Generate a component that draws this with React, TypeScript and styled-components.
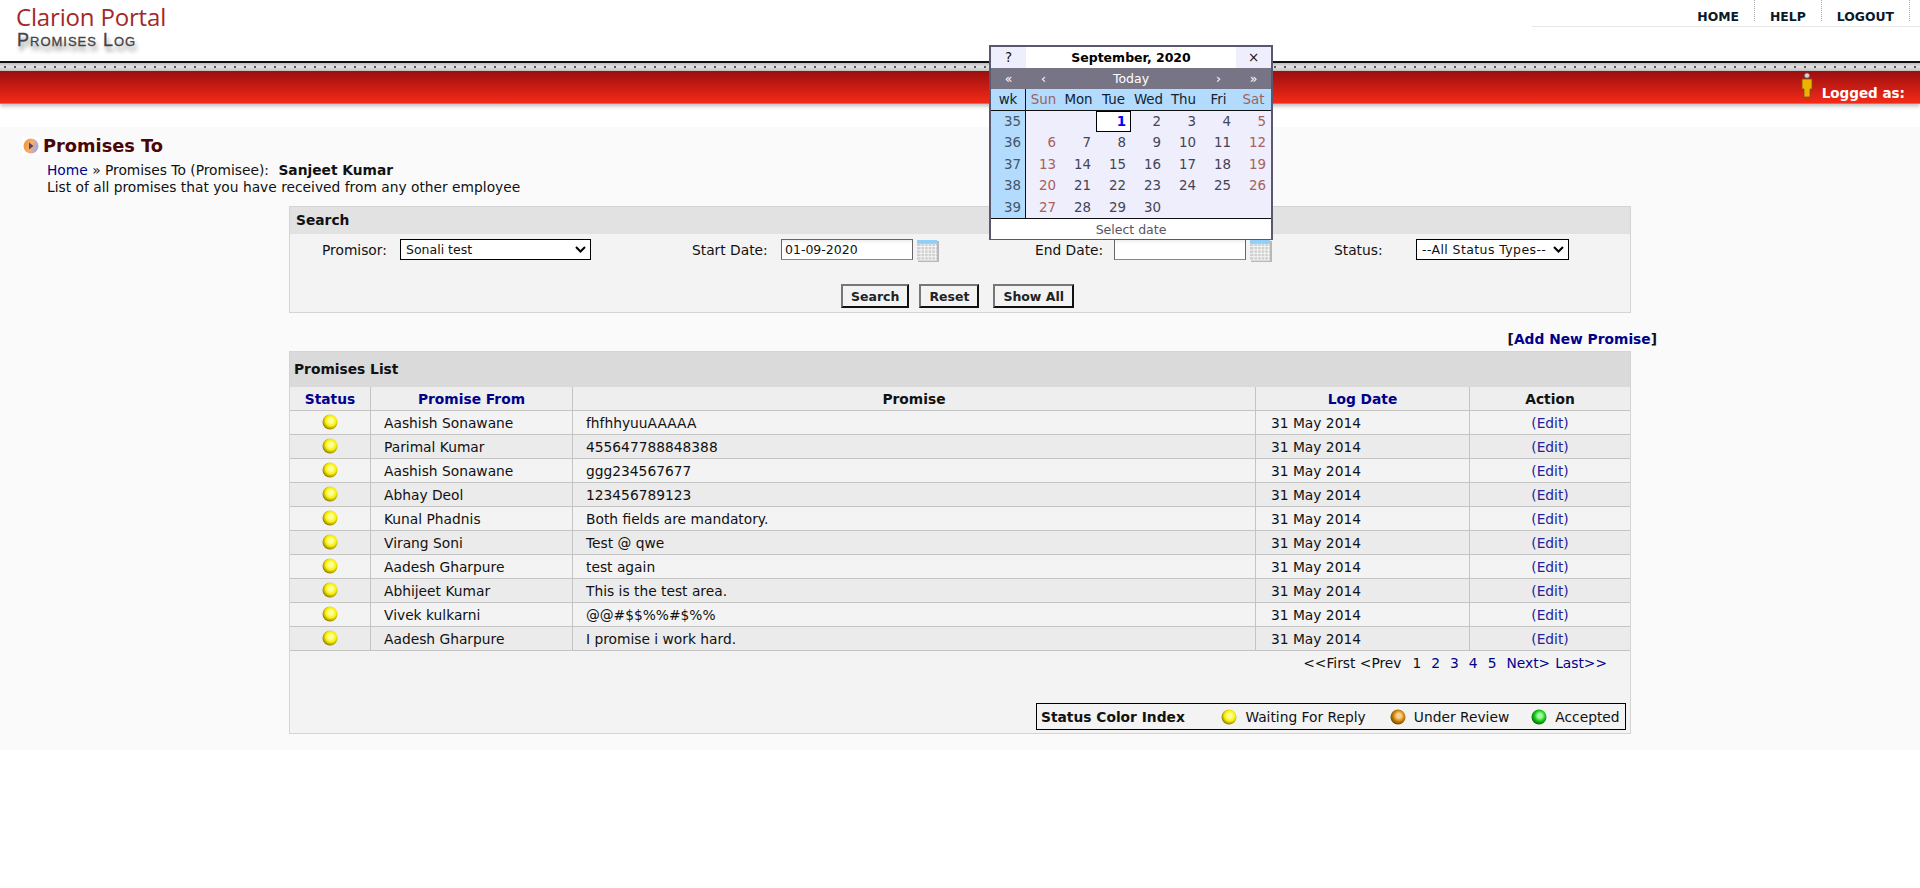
import styled, {createGlobalStyle} from "styled-components";

const GlobalStyle = createGlobalStyle`
  html, body {
    margin: 0;
    padding: 0;
    background: #fff;
    font-family: "DejaVu Sans", Verdana, sans-serif;
    font-size: 13.8px;
    color: #111;
  }
`;

const Page = styled.div`
  position: relative;
  width: 1920px;
  height: 888px;
  overflow: hidden;
`;

const Header = styled.header`
  height: 61px;
  display: flex;
  justify-content: space-between;
`;

const Logo = styled.div`
  padding: 3px 0 0 16px;
`;

const LogoTitle = styled.div`
  font-family: "Open Sans", "Liberation Sans", sans-serif;
  font-size: 24px;
  line-height: 27px;
  letter-spacing: -0.17px;
  color: #a3282a;
`;

const LogoSub = styled.div`
  font-family: "Liberation Sans", sans-serif;
  font-size: 18px;
  line-height: 20px;
  letter-spacing: 1px;
  font-variant: small-caps;
  color: #444;
  -webkit-text-stroke: 0.3px #444;
  text-shadow: 2px 5px 4px #888;
  padding-left: 1px;
`;

const TopNav = styled.nav`
  width: 388px;
  height: 27px;
  display: flex;
  justify-content: flex-end;
  border-bottom: 1px solid #e6e6e6;
  padding-right: 10px;
  box-sizing: border-box;
`;

const TopLink = styled.a`
  font-size: 12.4px;
  font-weight: 700;
  color: #0a1a2a;
  line-height: 33px;
  height: 21px;
  padding: 0 15px 0 15px;
  border-right: 1px dotted #aaa;
  box-sizing: border-box;
`;

const Strip = styled.div`
  height: 10px;
  box-sizing: border-box;
  border-top: 2px solid #111;
  background-color: #d4d4d4;
  background-image:
    radial-gradient(circle at 50% 50%, #555 0, #555 1px, transparent 1.5px),
    linear-gradient(#bdbdbd, #e2e2e2 45%, #c4c4c4);
  background-size: 10px 8px, 100% 100%;
`;

const RedBar = styled.div`
  height: 33px;
  box-sizing: border-box;
  background: linear-gradient(#9b0e0e, #f52a18);
  border-bottom: 1px solid #8a8a8a;
  box-shadow: 0 2px 4px #bbb;
  display: flex;
  justify-content: flex-end;
  align-items: flex-end;
  gap: 9px;
  padding-right: 15px;
`;

const LoggedAs = styled.span`
  color: #fff;
  font-weight: 700;
  font-size: 13.5px;
  line-height: 20px;
`;

const UserIcon = styled.svg`
  width: 12px;
  height: 26px;
  margin-bottom: 5px;
`;

const Content = styled.main`
  margin-top: 23px;
  height: 623px;
  background: #fafafa;
  padding: 7px 0 0 22px;
  box-sizing: border-box;
`;

const TitleRow = styled.div`
  display: flex;
  align-items: center;
  gap: 3px;
`;

const TitleIcon = styled.svg`
  width: 18px;
  height: 18px;
  background: #fff;
`;

const PageTitle = styled.h1`
  margin: 0;
  font-size: 17.8px;
  line-height: 24px;
  font-weight: 700;
  color: #4a0505;
`;

const Intro = styled.div`
  margin: 4px 0 0 25px;
  line-height: 17px;
`;

const Crumb = styled.a`
  color: #00008b;
`;

const Promisee = styled.strong`
  margin-left: 5px;
`;

const Panel = styled.section`
  width: 1342px;
  margin-left: 267px;
  box-sizing: border-box;
  border: 1px solid #d4d4d4;
  background: #f3f3f3;
`;

const SearchPanel = styled(Panel)`
  margin-top: 10px;
  height: 107px;
`;

const PanelTitle = styled.div<{$tall?: boolean}>`
  height: ${p => (p.$tall ? 35 : 27)}px;
  line-height: ${p => (p.$tall ? 35 : 27)}px;
  background: ${p => (p.$tall ? "#dadada" : "#e2e2e2")};
  font-weight: 700;
  padding-left: ${p => (p.$tall ? 4 : 6)}px;
`;

const FilterRow = styled.div`
  display: grid;
  grid-template-columns: 370px 343px 299px 1fr;
  padding: 4px 0 0 32px;
  height: 32px;
  box-sizing: border-box;
`;

const Filter = styled.div`
  display: flex;
  align-items: flex-start;
  line-height: 24px;
`;

const FilterLabel = styled.span<{$width: number}>`
  width: ${p => p.$width}px;
`;

const FakeSelect = styled.div<{$width: number; $spacing?: number}>`
  width: ${p => p.$width}px;
  height: 21px;
  margin-top: 1px;
  box-sizing: border-box;
  border: 1px solid #000;
  background: #fff;
  font-size: 12.5px;
  letter-spacing: ${p => p.$spacing || 0}px;
  line-height: 19px;
  padding-left: 5px;
  position: relative;
`;

const Caret = styled.svg`
  position: absolute;
  right: 4px;
  top: 6px;
  width: 11px;
  height: 7px;
`;

const DateInput = styled.div`
  width: 132px;
  height: 21px;
  margin-top: 1px;
  box-sizing: border-box;
  border: 1px solid #666;
  border-bottom-color: #888;
  background: linear-gradient(#eee, #fff 4px);
  font-size: 12.5px;
  line-height: 19px;
  padding-left: 3px;
`;

const CalIcon = styled.svg`
  width: 22px;
  height: 22px;
  margin: 2px 0 0 4px;
`;

const Buttons = styled.div`
  display: flex;
  justify-content: center;
  padding: 18px 0 0 0;
  margin-left: -5px;
  gap: 10px;
`;

const Btn = styled.button<{$gapLeft?: number}>`
  height: 24px;
  padding: 0 8px;
  margin-left: ${p => p.$gapLeft || 0}px;
  font-family: inherit;
  font-size: 12.5px;
  font-weight: 700;
  color: #222;
  background: #f3f3f3;
  border: 2px solid;
  border-color: #777 #111 #111 #777;
`;

const AddRow = styled.div`
  width: 1342px;
  margin: 16px 0 0 267px;
  height: 20px;
  line-height: 20px;
  text-align: right;
  font-weight: 700;
  color: #00008b;
  position: relative;
  left: 26px;
`;

const Bracket = styled.span`
  color: #111;
`;

const ListPanel = styled(Panel)`
  margin-top: 2px;
  height: 383px;
`;

const Table = styled.table`
  width: 100%;
  border-collapse: collapse;
  table-layout: fixed;
`;

const Th = styled.th<{$link?: boolean; $width?: number}>`
  width: ${p => (p.$width ? `${p.$width}px` : "auto")};
  height: 23px;
  padding: 0;
  background: #eee;
  border: 1px solid #c4c4c4;
  border-top: none;
  color: ${p => (p.$link ? "#00008b" : "#111")};
  font-size: 13.8px;
  font-weight: 700;
  &:first-child { border-left: none; }
  &:last-child { border-right: none; }
`;

const Tr = styled.tr<{$even: boolean}>`
  background: ${p => (p.$even ? "#ebebeb" : "#f3f3f3")};
`;

const Td = styled.td<{$center?: boolean; $pad?: number}>`
  height: 23px;
  padding: 0 0 0 ${p => (p.$center ? 0 : p.$pad || 13)}px;
  border: 1px solid #c4c4c4;
  text-align: ${p => (p.$center ? "center" : "left")};
  line-height: 16px;
  &:first-child { border-left: none; }
  &:last-child { border-right: none; }
`;

const EditLink = styled.a`
  color: #22229a;
`;

const Ball = styled.svg<{$lift?: number}>`
  width: 16px;
  height: 16px;
  display: inline-block;
  vertical-align: middle;
  flex: none;
  margin-top: ${p => -(p.$lift || 0)}px;
`;

const Pager = styled.div`
  display: flex;
  justify-content: flex-end;
  gap: 10px;
  line-height: 16px;
  padding: 4px 23px 0 0;
`;

const PagerPlain = styled.span<{$offset?: number}>`
  color: #111;
  margin-left: ${p => p.$offset || 0}px;
`;

const PagerLink = styled.a<{$offset?: number}>`
  color: #00008b;
  margin-left: ${p => p.$offset || 0}px;
`;

const LegendWrap = styled.div`
  display: flex;
  justify-content: flex-end;
  padding: 32px 4px 0 0;
`;

const Legend = styled.div`
  width: 590px;
  height: 27px;
  box-sizing: border-box;
  border: 1px solid #000;
  display: flex;
  align-items: center;
  padding: 0 4px 0 4px;
`;

const LegendTitle = styled.strong`
  width: 181px;
`;

const LegendItem = styled.span<{$width: number}>`
  display: flex;
  align-items: center;
  gap: 8px;
  width: ${p => p.$width}px;
`;

const Calendar = styled.div`
  position: absolute;
  left: 989px;
  top: 45px;
  width: 284px;
  height: 195px;
  box-sizing: border-box;
  border: 2px solid #5a5870;
  background: #efeefc;
  color: #445;
  font-size: 13.4px;
`;

const CalGrid = styled.div`
  display: grid;
  grid-template-columns: 35px repeat(7, 1fr);
`;

const CalTop = styled.div`
  display: grid;
  grid-template-columns: 35px 1fr 35px;
  height: 21px;
  line-height: 21px;
  text-align: center;
  color: #111;
`;

const CalMonth = styled.div`
  background: #fff;
  font-weight: 700;
  font-size: 12.5px;
  color: #000;
`;

const CalNav = styled.div`
  display: grid;
  grid-template-columns: 35px 35px 1fr 35px 35px;
  height: 21px;
  line-height: 21px;
  text-align: center;
  background: #777585;
  color: #fff;
  font-size: 12.5px;
`;

const CalHead = styled(CalGrid)`
  height: 21px;
  line-height: 21px;
  background: #b2dbfd;
  text-align: center;
  border-bottom: 1px solid #111;
`;

const HeadCell = styled.div<{$weekend?: boolean; $wk?: boolean}>`
  color: ${p => (p.$weekend ? "#a06060" : "#123")};
  ${p => p.$wk && "border-right: 1px solid #111;"}
`;

const WeekCell = styled.div`
  height: 21.4px;
  line-height: 21px;
  background: #b2dbfd;
  border-right: 1px solid #111;
  text-align: right;
  padding-right: 4px;
  color: #456;
`;

const DayCell = styled.div<{$weekend?: boolean; $today?: boolean}>`
  height: 21.4px;
  line-height: ${p => (p.$today ? 19 : 21)}px;
  box-sizing: border-box;
  text-align: right;
  padding-right: ${p => (p.$today ? 4 : 5)}px;
  color: ${p => (p.$today ? "#0000ff" : p.$weekend ? "#a86060" : "#445")};
  font-weight: ${p => (p.$today ? 700 : 400)};
  ${p => p.$today && "background: #fff; border: 1px solid #000;"}
`;

const CalFooter = styled.div`
  height: 20px;
  line-height: 21px;
  border-top: 1px solid #111;
  background: #fff;
  text-align: center;
  font-size: 12.5px;
  color: #556;
`;

const BallColors = {
    yellow: ["#fdfd90", "#f8ee00", "#857500"],
    orange: ["#f8d090", "#d08408", "#6a4000"],
    green: ["#a0f8a0", "#14c814", "#0a600a"],
};

function StatusBall({color, lift}: {color: keyof typeof BallColors; lift?: number}) {
    const [light, mid, dark] = BallColors[color];
    return (
        <Ball viewBox="0 0 16 16" $lift={lift}>
            <defs>
                <radialGradient id={`ball-${color}`} cx="0.56" cy="0.42" r="0.6">
                    <stop offset="0" stopColor={light}/>
                    <stop offset="0.25" stopColor={light}/>
                    <stop offset="0.6" stopColor={mid}/>
                    <stop offset="1" stopColor={dark}/>
                </radialGradient>
            </defs>
            <circle cx="8" cy="8" r="7.5" fill={`url(#ball-${color})`}/>
        </Ball>
    );
}

function CalendarIcon() {
    const cells = [];
    for (let i = 0; i < 5; i++) {
        cells.push(<line key={`v${i}`} x1={4 + i * 3.6} x2={4 + i * 3.6} y1="4" y2="20" stroke="#f4f4f4"/>);
        cells.push(<line key={`h${i}`} x1="0" x2="20" y1={6.5 + i * 3.4} y2={6.5 + i * 3.4} stroke="#f4f4f4"/>);
    }
    return (
        <CalIcon viewBox="0 0 22 22">
            <rect x="1" y="1" width="21" height="21" fill="#b8b8b8"/>
            <rect x="0" y="0" width="20" height="20" fill="#cfcfcf"/>
            <rect x="0" y="0" width="20" height="3.5" fill="#90d0f8"/>
            {cells}
        </CalIcon>
    );
}

function SelectCaret() {
    return (
        <Caret viewBox="0 0 11 7">
            <path d="M1 1l4.5 4.5L10 1" fill="none" stroke="#000" strokeWidth="2"/>
        </Caret>
    );
}

const rows = [
    ["Aashish Sonawane", "fhfhhyuuAAAAA"],
    ["Parimal Kumar", "455647788848388"],
    ["Aashish Sonawane", "ggg234567677"],
    ["Abhay Deol", "123456789123"],
    ["Kunal Phadnis", "Both fields are mandatory."],
    ["Virang Soni", "Test @ qwe"],
    ["Aadesh Gharpure", "test again"],
    ["Abhijeet Kumar", "This is the test area."],
    ["Vivek kulkarni", "@@#$$%%#$%%"],
    ["Aadesh Gharpure", "I promise i work hard."],
];

const weeks: [number, (number | null)[]][] = [
    [35, [null, null, 1, 2, 3, 4, 5]],
    [36, [6, 7, 8, 9, 10, 11, 12]],
    [37, [13, 14, 15, 16, 17, 18, 19]],
    [38, [20, 21, 22, 23, 24, 25, 26]],
    [39, [27, 28, 29, 30, null, null, null]],
];

const dayNames = ["Sun", "Mon", "Tue", "Wed", "Thu", "Fri", "Sat"];

function App() {
    return (
        <Page>
            <GlobalStyle/>
            <Header>
                <Logo>
                    <LogoTitle>Clarion Portal</LogoTitle>
                    <LogoSub>Promises Log</LogoSub>
                </Logo>
                <TopNav>
                    <TopLink>HOME</TopLink>
                    <TopLink>HELP</TopLink>
                    <TopLink>LOGOUT</TopLink>
                </TopNav>
            </Header>
            <Strip/>
            <RedBar>
                <UserIcon viewBox="0 0 12 26">
                    <circle cx="6" cy="3.5" r="2.6" fill="#d0d0e8" stroke="#554" strokeWidth="0.6"/>
                    <path d="M1 7h10v10H9v8H3v-8H1z" fill="#f0b000" stroke="#6a5a20" strokeWidth="0.8"/>
                </UserIcon>
                <LoggedAs>Logged as:</LoggedAs>
            </RedBar>
            <Content>
                <TitleRow>
                    <TitleIcon viewBox="0 0 18 18">
                        <defs>
                            <linearGradient id="title-ball" x1="0" x2="1" y1="0" y2="0.3">
                                <stop offset="0" stopColor="#f0902c"/>
                                <stop offset="0.6" stopColor="#f2b070"/>
                                <stop offset="1" stopColor="#a8a8e0"/>
                            </linearGradient>
                        </defs>
                        <circle cx="9" cy="9" r="7.5" fill="url(#title-ball)"/>
                        <path d="M7 5.5l4.5 3.5L7 12.500z" fill="#5a4060"/>
                    </TitleIcon>
                    <PageTitle>Promises To</PageTitle>
                </TitleRow>
                <Intro>
                    <Crumb>Home</Crumb> » Promises To (Promisee): <Promisee>Sanjeet Kumar</Promisee>
                    <br/>
                    List of all promises that you have received from any other employee
                </Intro>
                <SearchPanel>
                    <PanelTitle>Search</PanelTitle>
                    <FilterRow>
                        <Filter>
                            <FilterLabel $width={78}>Promisor:</FilterLabel>
                            <FakeSelect $width={191}>Sonali test<SelectCaret/></FakeSelect>
                        </Filter>
                        <Filter>
                            <FilterLabel $width={89}>Start Date:</FilterLabel>
                            <DateInput>01-09-2020</DateInput>
                            <CalendarIcon/>
                        </Filter>
                        <Filter>
                            <FilterLabel $width={79}>End Date:</FilterLabel>
                            <DateInput/>
                            <CalendarIcon/>
                        </Filter>
                        <Filter>
                            <FilterLabel $width={82}>Status:</FilterLabel>
                            <FakeSelect $width={153} $spacing={0.4}>--All Status Types--<SelectCaret/></FakeSelect>
                        </Filter>
                    </FilterRow>
                    <Buttons>
                        <Btn>Search</Btn>
                        <Btn>Reset</Btn>
                        <Btn $gapLeft={4}>Show All</Btn>
                    </Buttons>
                </SearchPanel>
                <AddRow><Bracket>[</Bracket>Add New Promise<Bracket>]</Bracket></AddRow>
                <ListPanel>
                    <PanelTitle $tall>Promises List</PanelTitle>
                    <Table>
                        <thead>
                            <tr>
                                <Th $link $width={80}>Status</Th>
                                <Th $link $width={201}>Promise From</Th>
                                <Th>Promise</Th>
                                <Th $link $width={213}>Log Date</Th>
                                <Th $width={160}>Action</Th>
                            </tr>
                        </thead>
                        <tbody>
                            {rows.map(([name, text], i) => (
                                <Tr key={i} $even={i % 2 === 1}>
                                    <Td $center><StatusBall color="yellow" lift={3}/></Td>
                                    <Td>{name}</Td>
                                    <Td>{text}</Td>
                                    <Td $pad={15}>31 May 2014</Td>
                                    <Td $center><EditLink>(Edit)</EditLink></Td>
                                </Tr>
                            ))}
                        </tbody>
                    </Table>
                    <Pager>
                        <PagerPlain>&lt;&lt;First &lt;Prev</PagerPlain>
                        <PagerPlain $offset={1}>1</PagerPlain>
                        <PagerLink>2</PagerLink>
                        <PagerLink>3</PagerLink>
                        <PagerLink>4</PagerLink>
                        <PagerLink>5</PagerLink>
                        <PagerLink>Next&gt;</PagerLink>
                        <PagerLink $offset={-5}>Last&gt;&gt;</PagerLink>
                    </Pager>
                    <LegendWrap>
                        <Legend>
                            <LegendTitle>Status Color Index</LegendTitle>
                            <LegendItem $width={169}><StatusBall color="yellow"/>Waiting For Reply</LegendItem>
                            <LegendItem $width={142}><StatusBall color="orange"/>Under Review</LegendItem>
                            <LegendItem $width={90}><StatusBall color="green"/>Accepted</LegendItem>
                        </Legend>
                    </LegendWrap>
                </ListPanel>
            </Content>
            <Calendar>
                <CalTop>
                    <div>?</div>
                    <CalMonth>September, 2020</CalMonth>
                    <div>×</div>
                </CalTop>
                <CalNav>
                    <div>«</div>
                    <div>‹</div>
                    <div>Today</div>
                    <div>›</div>
                    <div>»</div>
                </CalNav>
                <CalHead>
                    <HeadCell $wk>wk</HeadCell>
                    {dayNames.map(d => (
                        <HeadCell key={d} $weekend={d === "Sun" || d === "Sat"}>{d}</HeadCell>
                    ))}
                </CalHead>
                <CalGrid>
                    {weeks.map(([wk, days]) => [
                        <WeekCell key={wk}>{wk}</WeekCell>,
                        ...days.map((d, i) => (
                            <DayCell key={`${wk}-${i}`} $weekend={i === 0 || i === 6} $today={d === 1}>
                                {d}
                            </DayCell>
                        )),
                    ])}
                </CalGrid>
                <CalFooter>Select date</CalFooter>
            </Calendar>
        </Page>
    );
}

export default App;
